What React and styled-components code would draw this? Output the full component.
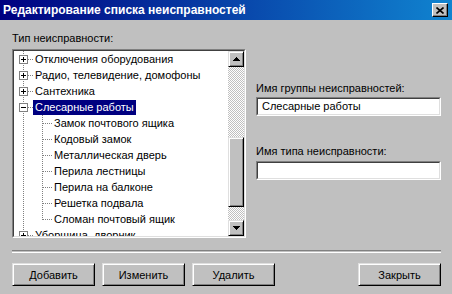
import React from "react";
import styled, { createGlobalStyle } from "styled-components";

const GlobalStyle = createGlobalStyle`
  html, body {
    margin: 0;
    padding: 0;
    background: #c0c0c0;
  }
  body {
    font-family: "Liberation Sans", Arial, sans-serif;
    font-size: 11px;
    color: #000;
  }
`;

const Window = styled.div`
  width: 452px;
  height: 294px;
  background: #c0c0c0;
  display: flex;
  flex-direction: column;
  overflow: hidden;
`;

const TitleBar = styled.div`
  height: 20px;
  flex: none;
  display: flex;
  align-items: center;
  justify-content: space-between;
  padding: 0 4px 0 3px;
  background: linear-gradient(to right, #000080, #1084d0);
`;

const Title = styled.div`
  color: #fff;
  font-weight: bold;
  font-size: 12px;
  white-space: nowrap;
`;

const CloseButton = styled.div`
  width: 16px;
  height: 14px;
  box-sizing: border-box;
  background: #c0c0c0;
  border-style: solid;
  border-width: 1px;
  border-color: #fff #000 #000 #fff;
  box-shadow: inset -1px -1px #808080;
  display: flex;
  align-items: center;
  justify-content: center;
`;

const Body = styled.div`
  flex: 1;
  display: flex;
  flex-direction: column;
  padding: 0 11px 0 12px;
`;

const Main = styled.div`
  display: flex;
  margin-top: 12px;
`;

const LeftCol = styled.div`
  width: 234px;
  display: flex;
  flex-direction: column;
`;

const RightCol = styled.div`
  width: 185px;
  margin-left: 10px;
  display: flex;
  flex-direction: column;
  padding-top: ${(p) => p.$top || 0}px;
`;

const Label = styled.div`
  height: 13px;
  line-height: 13px;
  white-space: nowrap;
  margin-top: ${(p) => p.$mt || 0}px;
  margin-bottom: ${(p) => p.$mb || 0}px;
`;

const Sunken = styled.div`
  box-sizing: border-box;
  border-style: solid;
  border-width: 1px;
  border-color: #808080 #fff #fff #808080;
`;

const SunkenInner = styled.div`
  box-sizing: border-box;
  border-style: solid;
  border-width: 1px;
  border-color: #404040 #dfdfdf #dfdfdf #404040;
  background: #fff;
  height: 100%;
`;

const TreeFrame = styled(Sunken)`
  height: 189px;
`;

const TreeInner = styled(SunkenInner)`
  display: flex;
  overflow: hidden;
`;

const TreeList = styled.div`
  flex: 1;
  overflow: hidden;
  padding-left: 0;
`;

const Row = styled.div`
  height: 16px;
  display: flex;
  align-items: center;
  white-space: nowrap;
`;

const NodeText = styled.span`
  height: 15px;
  line-height: 15px;
  padding: 0 2px;
  background: ${(p) => (p.$selected ? "#000080" : "transparent")};
  color: ${(p) => (p.$selected ? "#fff" : "#000")};
`;

const ScrollBar = styled.div`
  width: 16px;
  flex: none;
  display: flex;
  flex-direction: column;
`;

const Track = styled.div`
  height: ${(p) => p.$h}px;
  flex: ${(p) => (p.$h ? "none" : 1)};
  background-color: #fff;
  background-image: repeating-conic-gradient(#c0c0c0 0 25%, #fff 0 50%);
  background-size: 2px 2px;
`;

const Raised = styled.div`
  box-sizing: border-box;
  background: #c0c0c0;
  border-style: solid;
  border-width: 1px;
  border-color: #dfdfdf #000 #000 #dfdfdf;
  box-shadow: inset 1px 1px #fff, inset -1px -1px #808080;
`;

const ScrollButton = styled(Raised)`
  height: 16px;
  flex: none;
  display: flex;
  align-items: center;
  justify-content: center;
`;

const Thumb = styled(Raised)`
  height: 70px;
  flex: none;
`;

const Field = styled(Sunken)`
  height: 19px;
`;

const FieldInner = styled(SunkenInner)`
  padding: 0 4px;
  line-height: 15px;
  white-space: nowrap;
`;

const Separator = styled.div`
  margin-top: 12px;
  height: 1px;
  border-top: 1px solid #808080;
  border-bottom: 1px solid #fff;
`;

const ButtonRow = styled.div`
  display: flex;
  gap: 7px;
  margin-top: 10px;
`;

const Button = styled(Raised)`
  width: 83px;
  height: 23px;
  display: flex;
  align-items: center;
  justify-content: center;
  margin-left: ${(p) => (p.$push ? "auto" : "0")};
`;

const Gutter = ({ type, expander }) => (
  <svg width="19" height="16" style={{ display: "block", flex: "none" }} shapeRendering="crispEdges">
    {type !== "blank" && (
      <line
        x1="9.5"
        y1="0"
        x2="9.5"
        y2={type === "corner" ? 9 : 16}
        stroke="#808080"
        strokeDasharray="1 1"
      />
    )}
    {(type === "tee" || type === "corner") && (
      <line x1="10" y1="8.5" x2="19" y2="8.5" stroke="#808080" strokeDasharray="1 1" />
    )}
    {expander && (
      <g>
        <rect x="5.5" y="4.5" width="8" height="8" fill="#fff" stroke="#808080" />
        <line x1="7" y1="8.5" x2="12" y2="8.5" stroke="#000" />
        {expander === "plus" && <line x1="9.5" y1="6" x2="9.5" y2="11" stroke="#000" />}
      </g>
    )}
  </svg>
);

const Arrow = ({ down }) => (
  <svg width="7" height="4" style={{ display: "block" }} shapeRendering="crispEdges">
    <polygon points={down ? "0,0 7,0 3.5,4" : "3.5,0 7,4 0,4"} fill="#000" />
  </svg>
);

const nodes = [
  { cells: [["tee", "plus"]], text: "Отключения оборудования" },
  { cells: [["tee", "plus"]], text: "Радио, телевидение, домофоны" },
  { cells: [["tee", "plus"]], text: "Сантехника" },
  { cells: [["tee", "minus"]], text: "Слесарные работы", selected: true },
  { cells: [["pipe"], ["tee"]], text: "Замок почтового ящика" },
  { cells: [["pipe"], ["tee"]], text: "Кодовый замок" },
  { cells: [["pipe"], ["tee"]], text: "Металлическая дверь" },
  { cells: [["pipe"], ["tee"]], text: "Перила лестницы" },
  { cells: [["pipe"], ["tee"]], text: "Перила на балконе" },
  { cells: [["pipe"], ["tee"]], text: "Решетка  подвала" },
  { cells: [["pipe"], ["corner"]], text: "Сломан почтовый ящик" },
  { cells: [["tee", "plus"]], text: "Уборщица, дворник" },
];

const App = () => {
  return (
    <Window>
      <GlobalStyle />
      <TitleBar>
        <Title>Редактирование списка неисправностей</Title>
        <CloseButton>
          <svg width="8" height="7" style={{ display: "block" }}>
            <path d="M0.5 0.5 L7.5 6.5 M7.5 0.5 L0.5 6.5" stroke="#000" strokeWidth="1.6" />
          </svg>
        </CloseButton>
      </TitleBar>
      <Body>
        <Main>
          <LeftCol>
            <Label $mb={4}>Тип неисправности:</Label>
            <TreeFrame>
              <TreeInner>
                <TreeList>
                  {nodes.map((n) => (
                    <Row key={n.text}>
                      {n.cells.map(([type, exp], i) => (
                        <Gutter key={i} type={type} expander={exp} />
                      ))}
                      <NodeText $selected={n.selected}>{n.text}</NodeText>
                    </Row>
                  ))}
                </TreeList>
                <ScrollBar>
                  <ScrollButton>
                    <Arrow />
                  </ScrollButton>
                  <Track $h={70} />
                  <Thumb />
                  <Track />
                  <ScrollButton>
                    <Arrow down />
                  </ScrollButton>
                </ScrollBar>
              </TreeInner>
            </TreeFrame>
          </LeftCol>
          <RightCol $top={50}>
            <Label $mb={2}>Имя группы неисправностей:</Label>
            <Field>
              <FieldInner>Слесарные работы</FieldInner>
            </Field>
            <Label $mt={29} $mb={3}>Имя типа неисправности:</Label>
            <Field>
              <FieldInner />
            </Field>
          </RightCol>
        </Main>
        <Separator />
        <ButtonRow>
          <Button>Добавить</Button>
          <Button>Изменить</Button>
          <Button>Удалить</Button>
          <Button $push>Закрыть</Button>
        </ButtonRow>
      </Body>
    </Window>
  );
};

export default App;
